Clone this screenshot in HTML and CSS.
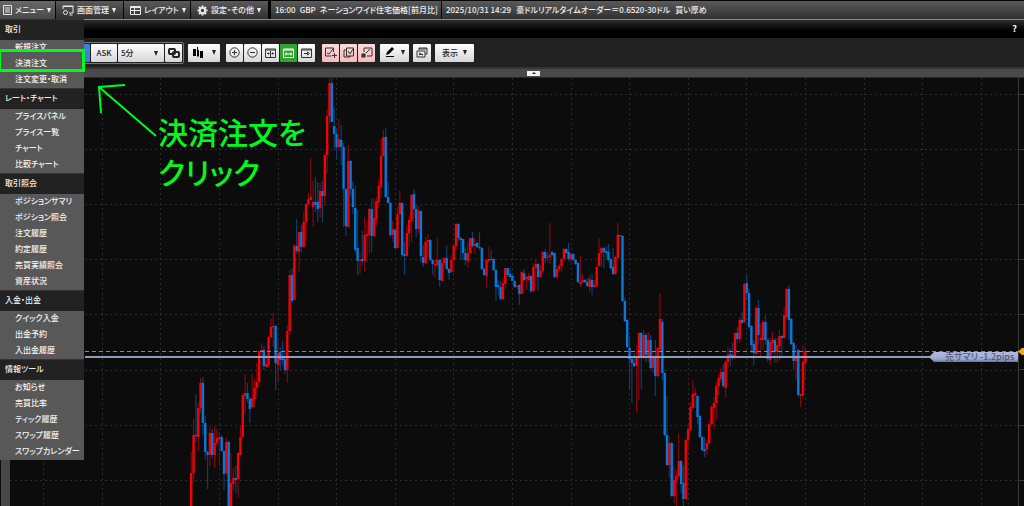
FILE: index.html
```
<!DOCTYPE html>
<html lang="ja">
<head>
<meta charset="utf-8">
<title>チャート</title>
<link rel="stylesheet" href="styles.css">
</head>
<body>
<div class="app">
  <header class="topbar">
    <nav class="topnav">
      <button class="nav-btn nav-menu"><svg class="ico" width="9" height="10" viewBox="0 0 9 10"><path d="M.5.5h8v9h-8zM2 3h5M2 5h5M2 7h5" /></svg>メニュー<span class="caret"></span></button>
      <button class="nav-btn nav-screen"><svg class="ico" width="12" height="11" viewBox="0 0 12 11"><path d="M1 4V1h10v7H7M1 1.5h10M7.500 10h3"/><circle cx="3.500" cy="7.500" r="2"/></svg>画面管理<span class="caret"></span></button>
      <button class="nav-btn nav-layout"><svg class="ico" width="11" height="9" viewBox="0 0 11 9"><path d="M.5.5h10v8H.5zM4.500.5v8M4.500 4.500h6M1 4.500h3M1 1.500h9"/></svg>レイアウト<span class="caret"></span></button>
      <button class="nav-btn nav-config"><svg class="ico" width="11" height="11" viewBox="-5.500 -5.500 11 11"><circle r="2.700" stroke-width="2"/><path stroke-width="2" d="M0-5v2M0 5V3M-5 0h2M5 0H3M-3.500-3.500l1.300 1.300M3.500 3.500L2.200 2.200M-3.500 3.500l1.300-1.300M3.500-3.500L2.200-2.200"/></svg>設定・その他<span class="caret"></span></button>
    </nav>
    <div class="ticker ticker-event"><span>16:00</span><span>GBP</span><span>ネーションワイド住宅価格[前月比]</span></div>
    <div class="ticker ticker-news"><span>2025/10/31 14:29</span><span>豪ドルリアルタイムオーダー＝0.6520-30ドル</span><span>買い厚め</span></div>
  </header>

  <div class="titlebar"><button class="help">?</button></div>

  <div class="toolbar">
    <div class="frame">
      <button class="tool tool-bid" aria-label="売値"></button>
      <button class="tool tool-ask">ASK</button>
      <span class="period"><select class="tool period-select" aria-label="足種"><option>5分</option></select><span class="caret caret-dark"></span></span>
      <button class="tool tool-link" aria-label="連動"><svg class="ico-d bold" width="12" height="10" viewBox="0 0 12 10"><rect x="1" y="1" width="6" height="5" rx="1"/><rect x="5" y="4" width="6" height="5" rx="1"/></svg></button>
    </div>
    <button class="tool tool-type" aria-label="チャート種類"><svg width="11" height="12" viewBox="0 0 11 12"><path d="M0 2h3v7H0zM4 0h1v3h1v6H4zM7 4h3v7H7zM1 9v2M4.500 9h1v1h-1z"/></svg><span class="caret caret-dark"></span></button>
    <div class="group">
      <button class="tool sq" aria-label="拡大"><svg class="ico-d" width="11" height="11" viewBox="0 0 11 11"><circle cx="5.500" cy="5.500" r="4.700"/><path d="M3 5.500h5M5.500 3v5"/></svg></button>
      <button class="tool sq" aria-label="縮小"><svg class="ico-d" width="11" height="11" viewBox="0 0 11 11"><circle cx="5.500" cy="5.500" r="4.700"/><path d="M3 5.500h5"/></svg></button>
      <button class="tool sq" aria-label="幅縮小"><svg class="ico-d" width="11" height="10" viewBox="0 0 11 10"><path d="M.5 1h10v8.500H.5zM.5 2h10M5.500 3v6M2 5.500h2.500M9 5.500H6.500M3.500 4.500v2M7.500 4.500v2"/></svg></button>
      <button class="tool sq green" aria-label="幅拡大"><svg class="ico-d" width="11" height="10" viewBox="0 0 11 10"><path d="M.5 1h10v8.500H.5zM.5 2h10M2 6h7M3 4.500v3M8 4.500v3"/></svg></button>
      <button class="tool sq" aria-label="右端"><svg class="ico-d" width="11" height="10" viewBox="0 0 11 10"><path d="M.5 1h10v8.500H.5zM.5 2h10M3 5.500h4M6.500 4v3l2-1.500z"/></svg></button>
    </div>
    <div class="group">
      <button class="tool sq pink" aria-label="新規"><svg class="ico-d" width="12" height="11" viewBox="0 0 12 11"><path d="M6.500 9H.5V1h8v4M2 6l2 1 4-5M9.500 6v5M7 8.500h5"/></svg></button>
      <button class="tool sq pink" aria-label="複製"><svg class="ico-d" width="12" height="11" viewBox="0 0 12 11"><path d="M3 3H1v7h6V9M3.500 1h7v8h-7zM5 4l2 3 3-5"/></svg></button>
      <button class="tool sq pink" aria-label="決済"><svg class="ico-d" width="12" height="11" viewBox="0 0 12 11"><path d="M3 5V1h8v8H6M5 6l4-4"/><path d="M1 10l3-3M1.500 7.500h2v2h-2z" stroke-width="2"/></svg></button>
    </div>
    <button class="tool tool-pen" aria-label="描画"><svg width="11" height="11" viewBox="0 0 11 11"><path d="M1 8l1-3 5-5 2 2-5 5zM1 9h8v1H1z"/></svg><span class="caret caret-dark"></span></button>
    <button class="tool tool-copy" aria-label="ウィンドウ"><svg class="ico-d" width="12" height="11" viewBox="0 0 12 11"><path d="M3 3V1h8v6H9M1 4h8v6H1zM3 7.500h4M3 2h8M3 6l4 2"/></svg></button>
    <button class="tool tool-view">表示<span class="caret caret-dark"></span></button>
  </div>

  <div class="strip"><button class="collapse" aria-label="折りたたむ"><span></span></button></div>

  <main class="chart">
    <svg class="plot" viewBox="0 78 1024 428" role="img" aria-label="ローソク足チャート">
      <g id="grid" class="grid"></g>
      <g id="candles"></g>
      <path class="now-line" d="M85 351.500H1018"/>
      <path class="pos-line" d="M85 357H930"/>
      <path class="rail" d="M1 78h9v428H1z"/>
      <path class="axis" d="M1018.500 78V506M1019 94.500h5M1019 149.500h5M1019 204.500h5M1019 259.500h5M1019 314.500h5M1019 369.500h5M1019 425.500h5M1019 480.500h5"/>
      <linearGradient id="tag" x2="0" y2="1"><stop offset="0" stop-color="#b2bddd"/><stop offset=".7" stop-color="#9ba8d0"/><stop offset="1" stop-color="#6375a8"/></linearGradient>
      <path d="M929 357l5-5h84v10h-84z" fill="url(#tag)"/>
      <text class="tag-text" x="945" y="360">売サマリ -1.2pips</text>
      <path class="now-mark" d="M1018 351.500l4-3.500h2v7h-2z"/>
    </svg>
  </main>

  <aside class="menu">
    <h2>取引</h2>
    <ul><li><a href="#">新規注文</a></li><li class="picked"><a href="#">決済注文</a></li><li><a href="#">注文変更・取消</a></li></ul>
    <h2>レート・チャート</h2>
    <ul><li><a href="#">プライスパネル</a></li><li><a href="#">プライス一覧</a></li><li><a href="#">チャート</a></li><li><a href="#">比較チャート</a></li></ul>
    <h2>取引照会</h2>
    <ul><li><a href="#">ポジションサマリ</a></li><li><a href="#">ポジション照会</a></li><li><a href="#">注文履歴</a></li><li><a href="#">約定履歴</a></li><li><a href="#">売買実績照会</a></li><li><a href="#">資産状況</a></li></ul>
    <h2>入金・出金</h2>
    <ul><li><a href="#">クイック入金</a></li><li><a href="#">出金予約</a></li><li><a href="#">入出金履歴</a></li></ul>
    <h2>情報ツール</h2>
    <ul><li><a href="#">お知らせ</a></li><li><a href="#">売買比率</a></li><li><a href="#">ティック履歴</a></li><li><a href="#">スワップ履歴</a></li><li><a href="#">スワップカレンダー</a></li></ul>
  </aside>

  <svg class="arrow" width="64" height="58" viewBox="0 0 64 58"><path d="M61 55L4 6M30 4L4 6l2 26"/></svg>
  <p class="note">決済注文を<br>クリック</p>
</div>
<script src="chart.js"></script>
</body>
</html>
```
FILE: styles.css
```
* { box-sizing: border-box; }
body {
  margin: 0;
  background: #0c0c0c;
  color: #f0f0f0;
  font: 500 8px/16px "Noto Sans CJK JP", "Noto Sans", sans-serif;
  font-feature-settings: "palt";
}
button, select {
  margin: 0;
  padding: 0;
  border: 0;
  font: inherit;
  font-feature-settings: inherit;
  color: inherit;
}
.app {
  position: relative;
  display: flex;
  flex-direction: column;
  height: 100vh;
  overflow: hidden;
}
.topbar {
  display: flex;
  flex: none;
  height: 20px;
  padding-top: 1px;
  background: #050505;
  border-bottom: 1px solid #8a8a8a;
}
.topnav { display: flex; gap: 1px; margin-right: 3px; }
.nav-btn {
  display: flex;
  align-items: center;
  gap: 3px;
  padding-left: 6px;
  background: linear-gradient(#5a5a5a, #303030);
}
.nav-menu { width: 55px; padding-left: 3px; background: linear-gradient(#686868, #484848); }
.nav-screen { width: 67px; }
.nav-layout { width: 66px; }
.nav-config { width: 77px; }
.ico { flex: none; fill: none; stroke: #e8e8e8; }
.caret {
  flex: none;
  border: 2px solid transparent;
  border-top: 5px solid #f0f0f0;
  border-bottom: 0;
}
.caret-dark { border-top-color: #222; }
.ticker {
  display: flex;
  align-items: center;
  gap: 5px;
  padding-left: 4px;
  overflow: hidden;
  white-space: nowrap;
  background: linear-gradient(#5a5a5a, #303030);
}
.ticker-event { flex: none; gap: 4px; width: 170px; margin-right: 1px; }
.ticker-news { flex: 1; }
.titlebar {
  display: flex;
  flex: none;
  justify-content: flex-end;
  align-items: center;
  height: 18px;
  padding-right: 7px;
  background: linear-gradient(#2c2c2c, #000 60%);
}
.help { background: none; color: #fff; font-weight: 700; font-size: 9px; }
.toolbar {
  display: flex;
  flex: none;
  align-items: center;
  gap: 4px;
  height: 29px;
  padding-left: 60px;
  background: #222;
}
.frame {
  display: flex;
  gap: 1px;
  height: 22px;
  padding: 1px;
  border: 1px solid #777;
  border-radius: 2px;
}
.group { display: flex; gap: 1px; margin: 0 1px 0 2px; }
.tool {
  display: flex;
  align-items: center;
  justify-content: center;
  gap: 5px;
  height: 18px;
  border-radius: 1px;
  background: linear-gradient(#fff, #d6d6d6);
  color: #222;
}
.tool-bid { width: 28px; background: #3f7fdc; }
.tool-ask { width: 26px; }
.period { display: flex; position: relative; }
.period-select { width: 46px; padding-left: 3px; appearance: none; }
.period .caret { position: absolute; right: 6px; top: 7px; }
.tool-link { width: 17px; }
.tool-type { width: 32px; gap: 8px; }
.sq { width: 17px; }
.green { background: #2fa62f; }
.green .ico-d { stroke: #fff; }
.pink { background: linear-gradient(#fbdcdc, #f5bcbc); }
.tool-pen { width: 29px; }
.tool-copy { width: 18px; }
.tool-view { width: 39px; }
.ico-d { fill: none; stroke: #333; }
.bold { stroke: #222; stroke-width: 2; }
.strip {
  display: flex;
  flex: none;
  justify-content: center;
  align-items: center;
  height: 11px;
  padding-left: 43px;
  background: #4a4a4a;
  border-top: 2px solid #343434;
  border-bottom: 1px solid #2a2a2a;
}
.collapse {
  display: flex;
  align-items: center;
  justify-content: center;
  width: 13px;
  height: 5px;
  background: #f2f2f2;
}
.collapse span { border: 2px solid transparent; border-top: 0; border-bottom: 2px solid #222; }
.chart { flex: 1; min-height: 0; }
.plot { display: block; width: 100%; }
.grid { stroke: #2c2c2c; stroke-dasharray: 2 3; }
.up { fill: #f50006; }
.down { fill: #0878de; }
.up-wick { fill: #86060a; }
.down-wick { fill: #09406f; }
.now-line { stroke: #b8860b; stroke-dasharray: 4 3; }
.pos-line { stroke: #929dbd; stroke-width: 2; }
.rail { fill: #484848; }
.axis { fill: none; stroke: #3a3a3a; }
.tag-text { fill: #4d5980; font-size: 9px; }
.now-mark { fill: #f2a815; }
.menu {
  position: absolute;
  top: 19px;
  left: 0;
  width: 84px;
  background: #585858;
}
.menu h2 {
  margin: 0;
  padding: 0 0 2px 5px;
  border-top: 1px solid #333;
  background: #222;
  font-size: 8px;
  font-weight: 500;
  line-height: 18px;
}
.menu ul { margin: 0; padding: 0; list-style: none; }
.menu li { position: relative; padding: 0 0 3px 15px; line-height: 13px; }
.menu a { display: block; color: #f4f4f4; text-decoration: none; white-space: nowrap; }
.picked::after {
  content: "";
  position: absolute;
  inset: -7px -1px 0 -2px;
  border: 3px solid #00fa1e;
  pointer-events: none;
}
.arrow {
  position: absolute;
  left: 95px;
  top: 81px;
  fill: none;
  stroke: #00fa1e;
  stroke-width: 2;
}
.note {
  position: absolute;
  left: 158px;
  top: 111px;
  margin: 0;
  color: #00fa1e;
  font-size: 30px;
  font-weight: 500;
  line-height: 40px;
}
```
FILE: chart.js
```
// Each candle: direction (r = up, b = down), body top, body bottom, high, low.
const data = `r473,506,452,506 r435,473,419,482 b435,436,394,442 r408,437,403,451 r383,408,378,413 b383,423,377,435
b423,452,416,460 b452,455,451,489 r433,455,427,466 b433,455,429,458 r443,455,426,468 r438,443,429,446
r437,439,432,466 b437,451,435,452 b451,474,450,490 r442,473,438,476 b442,506,441,506 r483,506,453,506
r478,484,468,491 b478,480,466,493 r453,479,452,497 r437,455,425,456 r395,437,393,438 r393,396,374,414
b393,399,383,403 b399,409,397,423 r398,407,374,408 r388,399,379,407 r382,388,363,398 r351,382,351,387
r350,352,343,358 b350,366,346,370 r364,367,355,367 r337,365,336,368 r327,337,319,338 r326,327,313,347
b326,363,325,390 r353,365,340,382 b352,360,347,370 b357,360,341,365 b359,370,350,374 r331,370,325,383
r275,331,270,335 b275,301,268,303 r246,300,244,300 b246,251,219,254 r232,252,232,272 b232,247,225,252
r222,247,212,248 r204,222,203,240 r199,204,193,205 r197,200,158,200 r202,207,181,227 b202,205,177,212
b202,209,182,222 r191,208,183,218 b191,196,181,222 r155,196,154,206 r116,155,109,173 r83,116,78,123
b83,122,78,122 b126,134,107,150 b134,147,128,160 r139,147,119,151 b140,147,125,165 b147,189,143,227
b189,226,188,236 r161,227,145,228 b161,189,160,197 b189,207,181,214 b208,250,186,253 b248,261,210,275
r260,261,253,274 b259,261,231,265 r235,261,217,272 r234,236,222,262 r209,235,208,253 b209,236,198,252
r218,236,199,237 r201,219,197,225 r186,202,179,208 r156,187,139,198 r137,156,130,157 b137,197,128,198
b197,203,181,203 b203,235,202,237 r229,235,221,242 b230,248,228,249 r214,248,207,248 r203,214,190,215
b203,255,202,257 b254,256,242,275 r233,256,225,257 r220,233,216,247 r195,221,194,242 b194,209,189,218
b209,229,205,237 r211,229,206,233 b211,256,210,262 b257,263,245,267 r242,263,237,264 r240,242,234,258
b240,260,239,261 b260,264,259,275 r264,265,260,277 r260,265,237,267 b260,280,259,287 r263,281,258,281
r258,263,257,265 b258,269,245,270 b269,273,268,280 r260,272,255,273 r246,260,245,272 r224,246,223,250
b224,238,223,241 b238,240,237,259 b239,253,239,260 b253,260,248,265 r253,261,242,268 r238,253,238,254
b238,246,232,248 r244,246,238,254 b243,247,242,248 b247,248,232,250 b248,269,247,270 b269,275,267,276
r260,276,259,288 r259,261,247,262 b259,260,250,261 b259,270,258,271 b270,287,269,301 b285,287,280,295
b287,299,281,300 r283,299,278,300 r268,284,268,289 b268,275,268,277 b274,277,268,278 b276,281,273,281
b281,287,280,288 r286,287,285,289 b285,294,284,305 r272,294,271,294 b273,280,269,282 r277,279,276,290
r276,280,273,281 b276,291,275,293 r267,291,263,292 r264,268,260,287 b264,277,263,290 r271,277,265,278
r252,271,251,272 b252,258,249,263 r257,258,252,262 r255,257,223,264 b252,255,251,256 b253,277,253,278
r269,277,265,279 r266,269,264,271 r259,266,258,272 r249,259,248,260 b249,253,248,254 b252,259,243,261
r254,259,253,263 b254,260,253,261 b260,264,259,265 b263,282,262,283 r282,284,256,287 r280,282,274,283
b280,282,279,283 b282,286,278,287 r279,287,275,292 b280,287,274,295 r285,287,280,288 r267,286,266,287
r253,266,238,267 r248,253,247,267 b248,252,247,268 b251,253,246,258 b252,260,244,262 b259,268,258,270
b267,274,248,275 r257,274,255,275 r235,258,223,259 b235,236,235,237 b236,301,235,302 b301,321,298,322
b320,347,319,348 b348,359,336,389 b359,363,358,403 b363,366,353,367 r357,366,345,413 r333,358,332,400
b333,357,332,389 r335,358,330,359 b335,355,333,362 r340,356,332,362 b340,368,335,369 r357,368,350,373
b357,376,340,396 r348,376,348,378 r319,349,293,350 b322,373,319,380 b373,435,372,437 b435,465,396,466
r443,465,437,478 b443,496,442,497 r480,496,467,503 r476,481,470,506 r461,476,433,478 b461,484,460,493
b483,499,465,506 r440,499,439,500 r429,440,425,450 r407,430,402,431 r394,408,380,409 r393,395,388,408
b396,417,395,424 b416,437,415,438 b437,450,436,452 b449,451,437,457 r443,449,440,455 r424,443,420,444
r407,424,405,425 r403,408,397,429 r386,403,382,420 r378,386,374,395 r372,379,368,382 b372,386,364,388
r362,388,360,398 r355,362,347,368 b354,357,348,366 b355,357,343,360 r333,358,332,359 b333,339,327,341
r320,339,317,343 b320,323,312,324 r284,322,283,323 b283,293,275,299 b293,327,289,328 b326,345,325,353
b344,353,340,366 r308,354,306,355 b308,335,300,345 r338,340,323,357 r322,340,320,350 b322,340,315,345
b340,359,338,362 r342,360,338,365 r340,343,332,353 b340,352,338,363 r345,352,338,363 r336,346,330,360
b336,338,335,358 r315,338,307,339 r289,317,288,318 b289,320,285,340 b319,344,318,345 b343,361,342,370
r356,361,345,380 b350,395,349,397 r394,396,394,407 r362,395,345,396 r351,363,347,380`;

const ns = "http://www.w3.org/2000/svg";
const step = 2.344;
const firstX = 191.2;

function add(parent, name, attrs) {
  const el = document.createElementNS(ns, name);
  for (const key in attrs) el.setAttribute(key, attrs[key]);
  parent.appendChild(el);
}

const grid = document.getElementById("grid");
for (let i = 0; i < 17; i++) {
  const x = Math.floor(43.7 + i * step * 25) + 0.5;
  add(grid, "path", { d: `M${x} 78V506` });
}
for (let i = 0; i < 8; i++) {
  const y = Math.floor(94.5 + i * 55.1) + 0.5;
  add(grid, "path", { d: `M10 ${y}H1018` });
}

const candles = document.getElementById("candles");
data.split(/\s+/).forEach((item, i) => {
  const kind = item[0] === "r" ? "up" : "down";
  const [top, bottom, high, low] = item.slice(1).split(",").map(Number);
  const x = firstX + i * step;
  add(candles, "rect", { class: kind + "-wick", x: x - 0.6, y: high, width: 1.2, height: low - high });
  add(candles, "rect", { class: kind, x: x - 1.2, y: top, width: 2.4, height: Math.max(1, bottom - top) });
});
```
